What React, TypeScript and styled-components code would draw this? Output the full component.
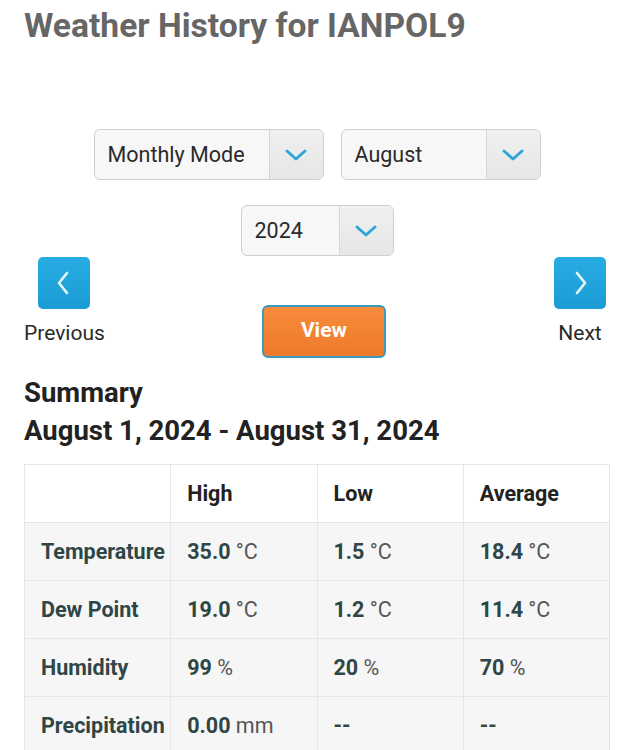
import React from "react";
import styled, { createGlobalStyle } from "styled-components";

const Global = createGlobalStyle`
  html, body { margin: 0; padding: 0; background: #fff; }
  body { font-family: Roboto, "Noto Sans", Arial, sans-serif; color: #222; }
  * { box-sizing: border-box; }
`;

const Page = styled.div`
  padding: 6px 22px 0 24px;
  display: flex;
  flex-direction: column;
`;

const Title = styled.h1`
  margin: 0;
  font-size: 33.6px;
  line-height: 40px;
  font-weight: 700;
  color: #666;
`;

const SelectRow = styled.div<{ $top: number }>`
  display: flex;
  justify-content: center;
  gap: 17px;
  margin-top: ${(p) => p.$top}px;
`;

const Select = styled.div<{ $w: number }>`
  width: ${(p) => p.$w}px;
  height: 51px;
  display: flex;
  border: 1px solid #cfcfcf;
  border-radius: 6px;
  background: #f7f7f7;
  overflow: hidden;
`;

const SelectText = styled.div`
  flex: 1;
  display: flex;
  align-items: center;
  padding-left: 13px;
  font-size: 21.5px;
  color: #2a2a2a;
`;

const Arrow = styled.div`
  width: 54px;
  border-left: 1px solid #d6d6d6;
  background: linear-gradient(#f0f0f0, #e6e6e6);
  display: flex;
  align-items: center;
  justify-content: center;
`;

const Chevron = ({ dir }: { dir: "down" | "left" | "right" }) => {
  if (dir === "down")
    return (
      <svg width="24" height="14" viewBox="0 0 24 14">
        <path d="M3 3 L12 11 L21 3" fill="none" stroke="#2fa6d8" strokeWidth="3" strokeLinecap="round" strokeLinejoin="round" />
      </svg>
    );
  const d = dir === "left" ? "M15 4 L7 14 L15 24" : "M9 4 L17 14 L9 24";
  return (
    <svg width="24" height="28" viewBox="0 0 24 28">
      <path d={d} fill="none" stroke="#e8f6fc" strokeWidth="2.6" strokeLinecap="round" strokeLinejoin="round" />
    </svg>
  );
};

const NavRow = styled.div`
  display: flex;
  justify-content: space-between;
  align-items: flex-start;
  margin-top: 1px;
  margin-right: 4px;
`;

const NavItem = styled.div`
  display: flex;
  flex-direction: column;
  align-items: center;
  gap: 12px;
`;

const NavButton = styled.button`
  width: 52px;
  height: 52px;
  border: none;
  border-radius: 5px;
  background: linear-gradient(#27ade4, #1b9bd4);
  display: flex;
  align-items: center;
  justify-content: center;
  padding: 0;
`;

const NavLabel = styled.div`
  font-size: 21px;
  line-height: 24px;
  color: #2a2a2a;
`;

const ViewButton = styled.button`
  margin-top: 48px;
  margin-right: 11px;
  width: 124px;
  height: 53px;
  border: 2px solid #3c9cbf;
  border-radius: 6px;
  background: linear-gradient(#f78c3c, #ee7a2a);
  color: #fff;
  font-family: Roboto, Arial, sans-serif;
  font-weight: 700;
  font-size: 21px;
  padding: 0 0 3px;
`;

const Heading = styled.h2<{ $top: number }>`
  margin: ${(p) => p.$top}px 0 0;
  font-size: 27.5px;
  line-height: 32px;
  font-weight: 700;
  color: #222;
`;

const Table = styled.table`
  margin-top: 17px;
  width: 586px;
  border-collapse: collapse;
  table-layout: fixed;
`;

const Row = styled.tr<{ $head?: boolean }>`
  background: ${(p) => (p.$head ? "#fff" : "#f6f6f6")};
  height: 58px;
`;

const Cell = styled.td<{ $label?: boolean }>`
  border: 1px solid #e6e6e6;
  padding: 0 16px;
  font-size: 21.5px;
  color: ${(p) => (p.$label ? "#2f4646" : "#333")};
  font-weight: ${(p) => (p.$label ? 700 : 400)};
  white-space: nowrap;
`;

const HeadCell = styled.th`
  border: 1px solid #e6e6e6;
  padding: 0 16px;
  font-size: 21.5px;
  font-weight: 700;
  color: #222;
  text-align: left;
`;

const Num = styled.b`
  font-weight: 700;
  color: #2f4646;
`;

const Unit = styled.span`
  color: #555;
`;

const rows: { label: string; vals: [string, string][] }[] = [
  { label: "Temperature", vals: [["35.0", "°C"], ["1.5", "°C"], ["18.4", "°C"]] },
  { label: "Dew Point", vals: [["19.0", "°C"], ["1.2", "°C"], ["11.4", "°C"]] },
  { label: "Humidity", vals: [["99", "%"], ["20", "%"], ["70", "%"]] },
  { label: "Precipitation", vals: [["0.00", "mm"], ["--", ""], ["--", ""]] },
];

export default function App() {
  return (
    <>
      <Global />
      <Page>
        <Title>Weather History for IANPOL9</Title>
        <SelectRow $top={83}>
          <Select $w={230}>
            <SelectText>Monthly Mode</SelectText>
            <Arrow><Chevron dir="down" /></Arrow>
          </Select>
          <Select $w={200}>
            <SelectText>August</SelectText>
            <Arrow><Chevron dir="down" /></Arrow>
          </Select>
        </SelectRow>
        <SelectRow $top={25}>
          <Select $w={153}>
            <SelectText>2024</SelectText>
            <Arrow><Chevron dir="down" /></Arrow>
          </Select>
        </SelectRow>
        <NavRow>
          <NavItem>
            <NavButton aria-label="Previous"><Chevron dir="left" /></NavButton>
            <NavLabel>Previous</NavLabel>
          </NavItem>
          <ViewButton>View</ViewButton>
          <NavItem>
            <NavButton aria-label="Next"><Chevron dir="right" /></NavButton>
            <NavLabel>Next</NavLabel>
          </NavItem>
        </NavRow>
        <Heading $top={19}>Summary</Heading>
        <Heading $top={6}>August 1, 2024 - August 31, 2024</Heading>
        <Table>
          <tbody>
            <Row $head>
              <HeadCell></HeadCell>
              <HeadCell>High</HeadCell>
              <HeadCell>Low</HeadCell>
              <HeadCell>Average</HeadCell>
            </Row>
            {rows.map((r) => (
              <Row key={r.label}>
                <Cell $label>{r.label}</Cell>
                {r.vals.map(([n, u], i) => (
                  <Cell key={i}>
                    <Num>{n}</Num>
                    {u && <Unit> {u}</Unit>}
                  </Cell>
                ))}
              </Row>
            ))}
          </tbody>
        </Table>
      </Page>
    </>
  );
}
